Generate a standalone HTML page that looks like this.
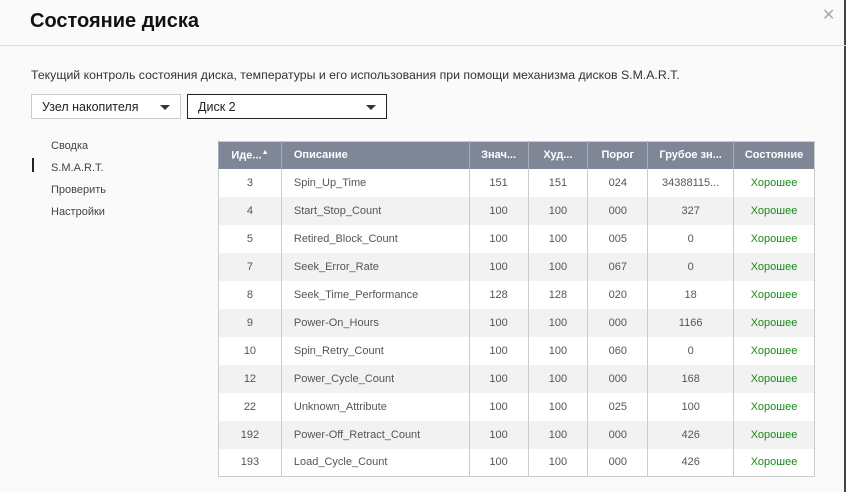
<!DOCTYPE html>
<html><head><meta charset="utf-8"><style>
*{margin:0;padding:0;box-sizing:border-box}
body{width:846px;height:492px;background:#fafafa;font-family:"Liberation Sans","Noto Sans CJK JP",sans-serif;position:relative;overflow:hidden;color:#333}
.edge{position:absolute;right:0;top:0;width:2px;height:492px;background:#444}
h1{position:absolute;left:30px;top:10px;font-size:20px;font-weight:bold;color:#111}
.hr{position:absolute;left:0;top:45px;width:846px;height:1px;background:#ddd}
.x{position:absolute;left:822px;top:5px;font-size:16px;color:#aaa;font-weight:300}
.desc{position:absolute;left:31px;top:68px;font-size:12.3px;color:#333}
.sel{position:absolute;top:94px;height:25px;font-size:12.5px;padding:5px 10px;color:#222}
.sel:after{content:"";position:absolute;right:10px;top:10px;border-left:5px solid transparent;border-right:5px solid transparent;border-top:5px solid #333}
.nav{position:absolute;left:51px;font-size:11px;color:#444}
.bar{position:absolute;left:32px;top:158px;width:2px;height:14px;background:#222}
table{position:absolute;left:218px;top:141px;border-collapse:collapse;font-size:11px;width:597px;border:1px solid #ccc}
th{background:#7f8797;color:#fff;height:27px;font-weight:bold;font-size:11px;border-left:1px solid #a5abb6;padding:0}
td{height:28px;text-align:center;border-left:1px solid #ccc;color:#555;padding:0}
tbody tr:nth-child(odd) td{background:#fff}
tbody tr:nth-child(even) td{background:#f2f2f2}
td.l,th.l{text-align:left;padding-left:12px}
td.g{color:#1a8a1a}
</style></head><body>
<div class="edge"></div>
<h1>Состояние диска</h1>
<div class="x">✕</div>
<div class="hr"></div>
<div class="desc">Текущий контроль состояния диска, температуры и его использования при помощи механизма дисков S.M.A.R.T.</div>
<div class="sel" style="left:31px;width:150px;border:1px solid #ccc;background:#fff">Узел накопителя</div>
<div class="sel" style="left:187px;width:200px;border:1px solid #222;background:#fff">Диск 2</div>
<div class="nav" style="top:140px">Сводка</div>
<div class="bar"></div>
<div class="nav" style="top:162px">S.M.A.R.T.</div>
<div class="nav" style="top:184px">Проверить</div>
<div class="nav" style="top:206px">Настройки</div>
<table>
<colgroup><col style="width:63px"><col style="width:188px"><col style="width:59px"><col style="width:60px"><col style="width:60px"><col style="width:86px"><col style="width:81px"></colgroup>
<thead><tr><th>Иде...<sup style="font-size:7px">▲</sup></th><th class="l">Описание</th><th>Знач...</th><th>Худ...</th><th>Порог</th><th>Грубое зн...</th><th>Состояние</th></tr></thead>
<tbody>
<tr><td>3</td><td class="l">Spin_Up_Time</td><td>151</td><td>151</td><td>024</td><td>34388115...</td><td class="g">Хорошее</td></tr>
<tr><td>4</td><td class="l">Start_Stop_Count</td><td>100</td><td>100</td><td>000</td><td>327</td><td class="g">Хорошее</td></tr>
<tr><td>5</td><td class="l">Retired_Block_Count</td><td>100</td><td>100</td><td>005</td><td>0</td><td class="g">Хорошее</td></tr>
<tr><td>7</td><td class="l">Seek_Error_Rate</td><td>100</td><td>100</td><td>067</td><td>0</td><td class="g">Хорошее</td></tr>
<tr><td>8</td><td class="l">Seek_Time_Performance</td><td>128</td><td>128</td><td>020</td><td>18</td><td class="g">Хорошее</td></tr>
<tr><td>9</td><td class="l">Power-On_Hours</td><td>100</td><td>100</td><td>000</td><td>1166</td><td class="g">Хорошее</td></tr>
<tr><td>10</td><td class="l">Spin_Retry_Count</td><td>100</td><td>100</td><td>060</td><td>0</td><td class="g">Хорошее</td></tr>
<tr><td>12</td><td class="l">Power_Cycle_Count</td><td>100</td><td>100</td><td>000</td><td>168</td><td class="g">Хорошее</td></tr>
<tr><td>22</td><td class="l">Unknown_Attribute</td><td>100</td><td>100</td><td>025</td><td>100</td><td class="g">Хорошее</td></tr>
<tr><td>192</td><td class="l">Power-Off_Retract_Count</td><td>100</td><td>100</td><td>000</td><td>426</td><td class="g">Хорошее</td></tr>
<tr><td>193</td><td class="l">Load_Cycle_Count</td><td>100</td><td>100</td><td>000</td><td>426</td><td class="g">Хорошее</td></tr>
</tbody></table>
</body></html>
